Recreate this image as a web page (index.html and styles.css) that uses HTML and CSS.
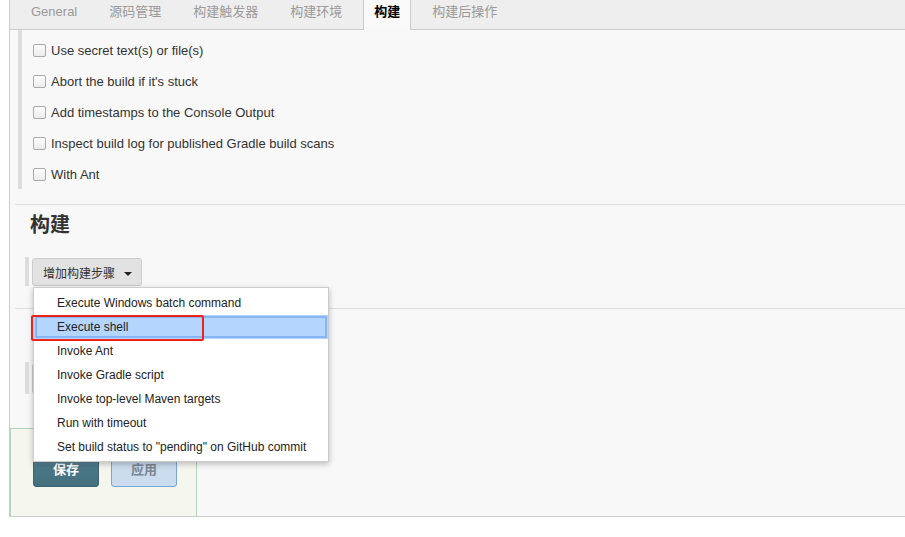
FILE: index.html
```html
<!DOCTYPE html>
<html lang="zh-CN">

<head>
    <meta charset="UTF-8">
    <title>构建配置</title>
    <link rel="stylesheet" href="styles.css">
</head>

<body>
    <div class="page">
        <div class="tabbar">
            <span class="tab">General</span>
            <span class="tab">源码管理</span>
            <span class="tab">构建触发器</span>
            <span class="tab">构建环境</span>
            <span class="tab active">构建</span>
            <span class="tab">构建后操作</span>
        </div>

        <div class="options">
            <label class="option"><span class="check"></span>Use secret text(s) or file(s)</label>
            <label class="option"><span class="check"></span>Abort the build if it's stuck</label>
            <label class="option"><span class="check"></span>Add timestamps to the Console Output</label>
            <label class="option"><span class="check"></span>Inspect build log for published Gradle build scans</label>
            <label class="option"><span class="check"></span>With Ant</label>
        </div>

        <div class="separator"></div>

        <div class="section">
            <h2>构建</h2>
            <div class="step-row">
                <span class="step-wrap">
                    <button class="step-button">增加构建步骤 <span class="caret"></span></button>
                    <ul class="menu">
                        <li>Execute Windows batch command</li>
                        <li class="active">Execute shell</li>
                        <li>Invoke Ant</li>
                        <li>Invoke Gradle script</li>
                        <li>Invoke top-level Maven targets</li>
                        <li>Run with timeout</li>
                        <li>Set build status to "pending" on GitHub commit</li>
                        <span class="mark"></span>
                    </ul>
                </span>
            </div>
        </div>

        <div class="separator second"></div>

        <div class="section post">
            <div class="step-row">
                <!-- covered by the open menu -->
                <button class="step-button blank" aria-label="增加构建后操作步骤"></button>
            </div>
        </div>

        <div class="bottom-bar">
            <button class="btn save">保存</button>
            <button class="btn apply">应用</button>
        </div>
    </div>
</body>

</html>
```

FILE: styles.css
```css
body {
    margin: 0;
    font-family: 'Liberation Sans', 'Noto Sans CJK SC', sans-serif;
    color: #333;
    background: #fff;
}

.page {
    margin-left: 9px;
    height: 517px;
    box-sizing: border-box;
    border-left: 1px solid #ccc;
    border-bottom: 1px solid #ccc;
    background: #f8f8f8;
    display: flex;
    flex-direction: column;
}

/* tabs */
.tabbar {
    display: flex;
    height: 29px;
    padding-left: 10px;
    background: #eee;
    border-bottom: 1px solid #ccc;
}

.tab {
    padding: 0 10px;
    margin-right: 10px;
    line-height: 24px;
    font-size: 13px;
    color: #9a9a9a;
    border-left: 1px solid transparent;
    border-right: 1px solid transparent;
}

.tab.active {
    height: 30px;
    background: #f9f9f9;
    border-color: #ccc;
    color: #000;
    font-weight: bold;
}

/* checkbox options */
.options {
    margin-left: 8px;
    padding: 5px 0 0 11px;
    height: 154px;
    border-left: 4px solid #ddd;
}

.option {
    display: flex;
    align-items: center;
    height: 31px;
    font-size: 13px;
    color: #333;
}

.check {
    width: 11px;
    height: 11px;
    margin-right: 5px;
    border: 1px solid #a9a9a9;
    border-radius: 2px;
    background: linear-gradient(#fdfdfd, #ececec);
}

.separator {
    height: 1px;
    margin: 15px 0 0 5px;
    background: #ddd;
}

.separator.second {
    margin-top: 22px;
}

.section h2 {
    margin: 6px 0 0 20px;
    font-size: 20px;
    line-height: 28px;
    color: #333;
}

.step-row {
    margin: 18px 0 0 15px;
    padding: 1px 0 0 3px;
    height: 28px;
    border-left: 4px solid #ddd;
}

.post .step-row {
    margin-top: 53px;
    height: 31px;
}

.step-wrap {
    position: relative;
    display: inline-block;
}

.step-button {
    height: 28px;
    padding: 0 9px 0 10px;
    font-family: inherit;
    font-size: 12px;
    color: #333;
    background: #e2e2e2;
    border: 1px solid #ccc;
    border-radius: 3px;
}

.step-button.blank {
    width: 150px;
    height: 31px;
}

.caret {
    display: inline-block;
    margin-left: 6px;
    vertical-align: middle;
    border-left: 4px solid transparent;
    border-right: 4px solid transparent;
    border-top: 4px solid #222;
}

/* dropdown menu */
.menu {
    position: absolute;
    top: 29px;
    left: 1px;
    z-index: 5;
    width: 296px;
    box-sizing: border-box;
    margin: 0;
    padding: 3px 0 2px;
    list-style: none;
    background: #fff;
    border: 1px solid #ccc;
    box-shadow: 0 2px 6px rgba(0, 0, 0, 0.25);
}

.menu li {
    height: 24px;
    line-height: 24px;
    padding-left: 23px;
    font-size: 12px;
    color: #222;
    white-space: nowrap;
}

.menu li.active {
    background: #b4d5fd;
    outline: 2px solid #86b5f5;
    outline-offset: -3px;
}

.mark {
    position: absolute;
    top: 27px;
    left: -3px;
    width: 173px;
    height: 26px;
    box-sizing: border-box;
    border: 2px solid #f0231b;
    border-radius: 2px;
}

/* save / apply */
.bottom-bar {
    margin-top: auto;
    width: 187px;
    height: 88px;
    box-sizing: border-box;
    padding: 25px 0 0 22px;
    display: flex;
    gap: 12px;
    background: #f5f7ef;
    border: 1px solid #b3d5bf;
    border-bottom: none;
}

.btn {
    width: 66px;
    height: 33px;
    padding-bottom: 6px;
    font-family: inherit;
    font-size: 13px;
    font-weight: bold;
    border-radius: 3px;
}

.save {
    color: #fff;
    background: linear-gradient(#7ea2b0, #4b7888 35%, #436f7e);
    border: 1px solid #3b6372;
}

.apply {
    color: #7a8692;
    background: #cbdcee;
    border: 1px solid #79a5d8;
}
```
